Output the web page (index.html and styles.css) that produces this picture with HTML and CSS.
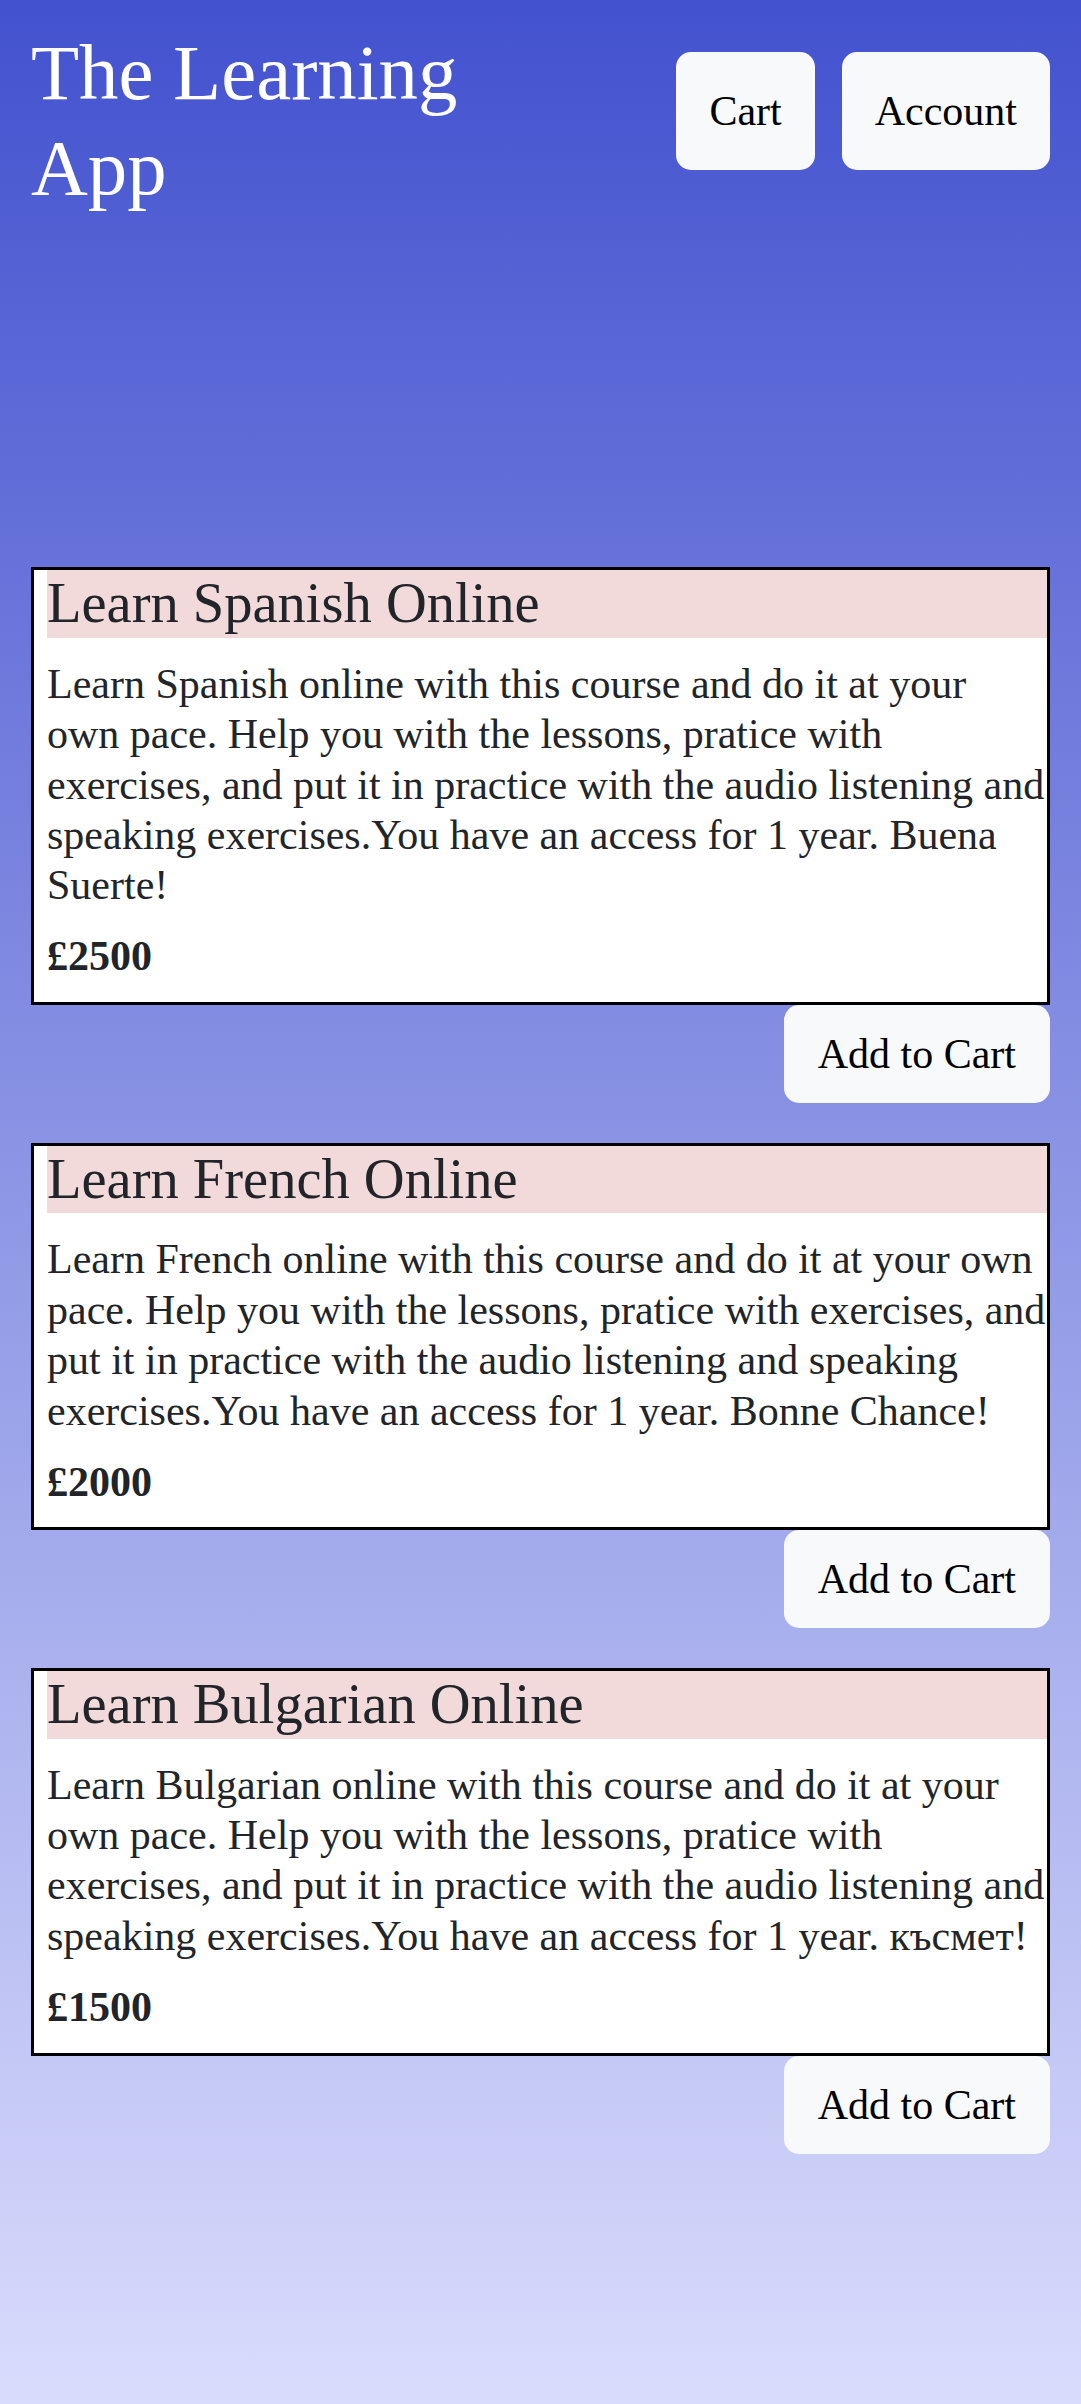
FILE: index.html
```html
<!DOCTYPE html>
<html lang="en">
<head>
<meta charset="utf-8">
<title>The Learning App</title>
<link rel="stylesheet" href="styles.css">
</head>
<body>
<header class="topbar">
  <h1 class="brand">The Learning App</h1>
  <nav class="nav">
    <button class="btn btn-nav" type="button">Cart</button>
    <button class="btn btn-nav" type="button">Account</button>
  </nav>
</header>
<main class="courses">
  <section class="course">
    <div class="card">
      <h3 class="card-title">Learn Spanish Online</h3>
      <p class="card-text">Learn Spanish online with this course and do it at your own pace. Help you with the lessons, pratice with exercises, and put it in practice with the audio listening and speaking exercises.You have an access for 1 year. Buena Suerte!</p>
      <p class="card-price">£2500</p>
    </div>
    <div class="actions"><button class="btn btn-add" type="button">Add to Cart</button></div>
  </section>
  <section class="course">
    <div class="card">
      <h3 class="card-title">Learn French Online</h3>
      <p class="card-text">Learn French online with this course and do it at your own pace. Help you with the lessons, pratice with exercises, and put it in practice with the audio listening and speaking exercises.You have an access for 1 year. Bonne Chance!</p>
      <p class="card-price">£2000</p>
    </div>
    <div class="actions"><button class="btn btn-add" type="button">Add to Cart</button></div>
  </section>
  <section class="course">
    <div class="card">
      <h3 class="card-title">Learn Bulgarian Online</h3>
      <p class="card-text">Learn Bulgarian online with this course and do it at your own pace. Help you with the lessons, pratice with exercises, and put it in practice with the audio listening and speaking exercises.You have an access for 1 year. късмет!</p>
      <p class="card-price">£1500</p>
    </div>
    <div class="actions"><button class="btn btn-add" type="button">Add to Cart</button></div>
  </section>
</main>
</body>
</html>
```
FILE: styles.css
```css
html {
  min-height: 100%;
  background: linear-gradient(180deg, #4352cf 0%, #d9dcfc 100%);
}

body {
  margin: 0;
  padding: 0 31px;
  font-family: "Liberation Serif", "Times New Roman", serif;
  font-size: 42px;
  color: #212529;
}

.topbar {
  display: flex;
  justify-content: space-between;
  align-items: flex-start;
  padding-top: 26px;
}

.brand {
  margin: 0;
  width: 500px;
  font-size: 78.75px;
  line-height: 1.2;
  font-weight: normal;
  color: #ffffff;
}

.nav {
  display: flex;
  gap: 27px;
  margin-top: 26px;
}

.btn {
  font-family: inherit;
  font-size: 42px;
  line-height: normal;
  color: #000000;
  background: #f8f9fa;
  border: none;
  border-radius: 15px;
  cursor: pointer;
}

.btn-nav {
  padding: 35px 33px;
}

.courses {
  margin-top: 352px;
  display: flex;
  flex-direction: column;
  gap: 39.5px;
}

.card {
  background: #ffffff;
  border: 3px solid #000000;
}

.card-title {
  margin: 0 0 21px 13px;
  background: #f2d9da;
  font-size: 56.5px;
  line-height: 1.2;
  font-weight: normal;
}

.card-text {
  margin: 0 0 20.5px 13px;
  line-height: 1.2;
}

.card-price {
  margin: 0 0 20.5px 13px;
  line-height: 1.2;
  font-weight: bold;
}

.actions {
  display: flex;
  justify-content: flex-end;
}

.btn-add {
  padding: 25px 34px;
}
```
